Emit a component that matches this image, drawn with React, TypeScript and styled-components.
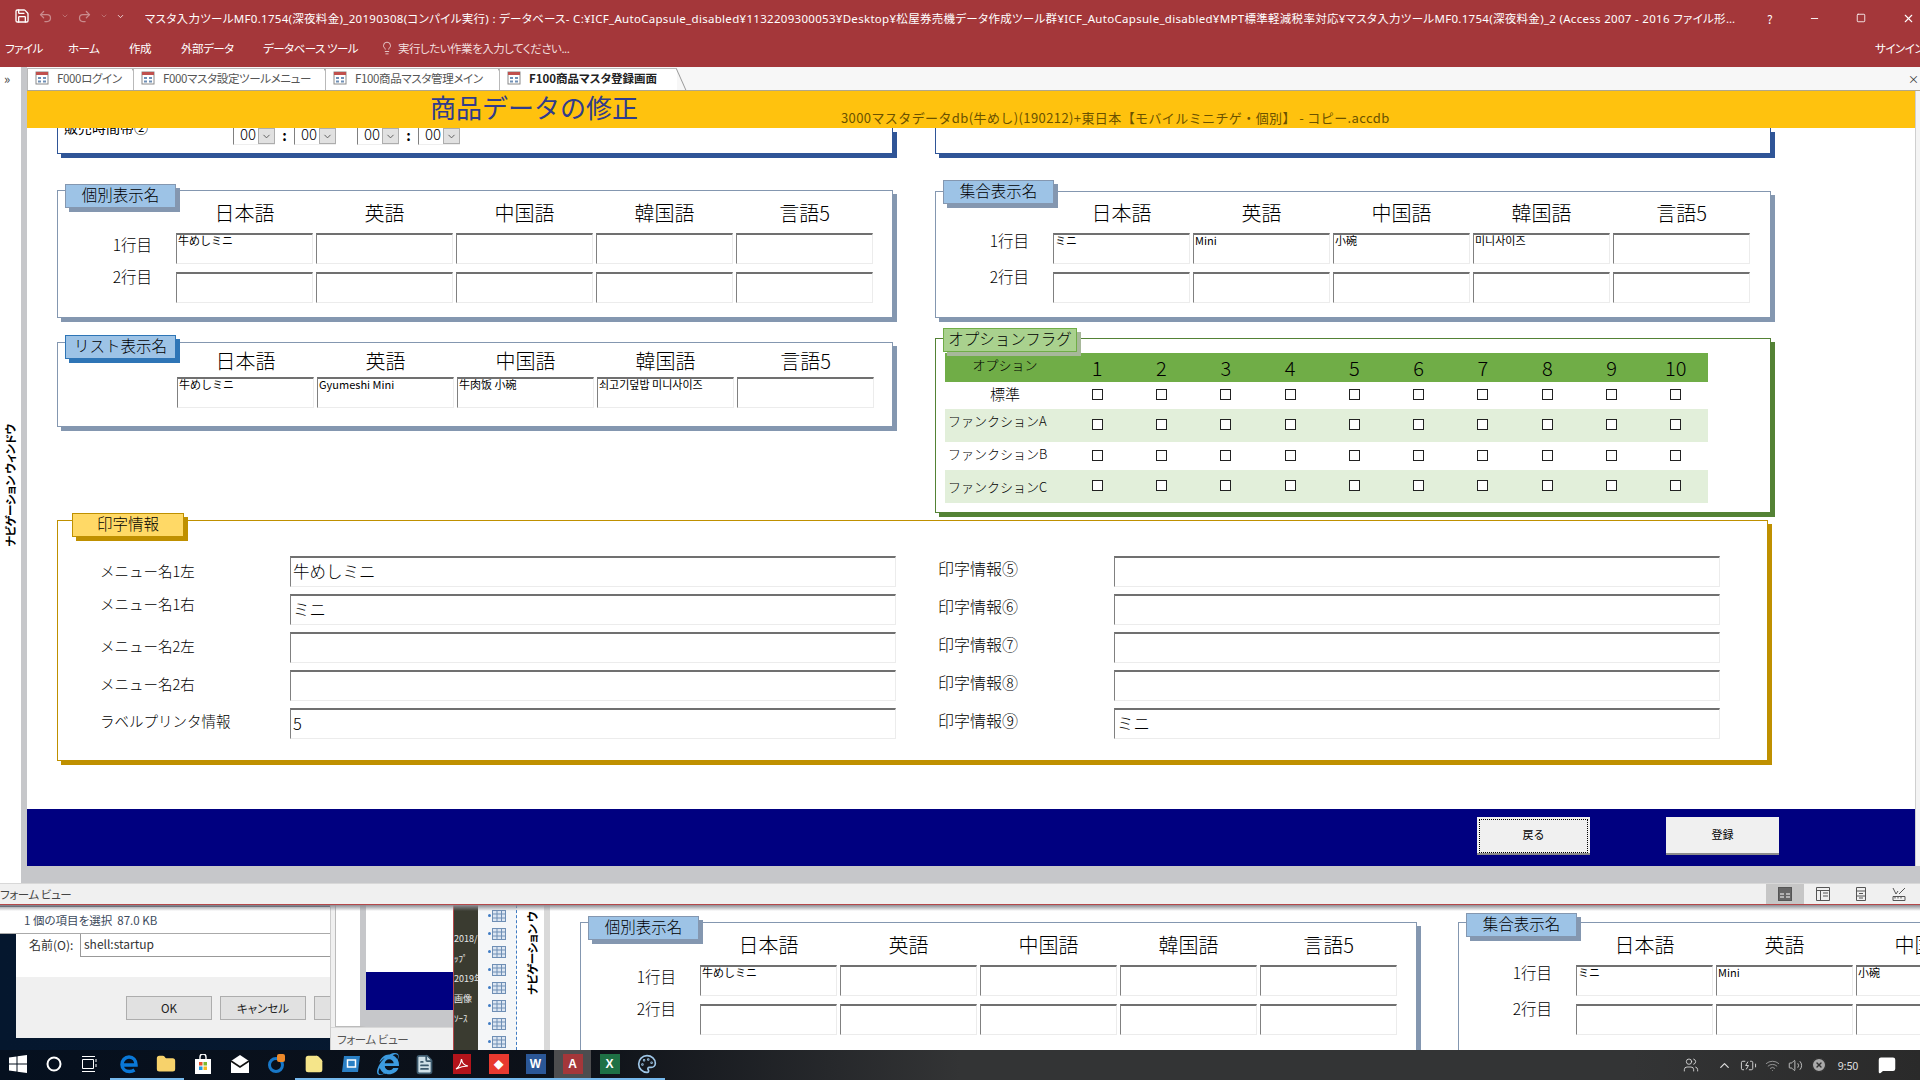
import styled, { createGlobalStyle } from "styled-components";
import {
  Save,
  Undo2,
  Redo2,
  ChevronDown,
  ChevronUp,
  Lightbulb,
  Minus,
  Square,
  X,
  Wifi,
  Volume2,
  BatteryCharging,
  CircleX,
  MessageSquare,
  Users,
  Folder,
  StickyNote,
  FileText,
  Palette,
} from "lucide-react";
import { FaInternetExplorer } from "react-icons/fa";

const GlobalStyle = createGlobalStyle`
  html, body {
    margin: 0;
    padding: 0;
    overflow: hidden;
    background: #000;
    font-family: "Noto Sans CJK JP", "Liberation Sans", sans-serif;
    color: #000;
  }
  * { box-sizing: border-box; }
`;

const LANGS = ["日本語", "英語", "中国語", "韓国語", "言語5"];
const FLAGS = [1, 2, 3, 4, 5, 6, 7, 8, 9, 10];

type RowDef = { label?: string; dy?: number; values?: string[] };

const FormIcon = () => (
  <svg width="14" height="14" viewBox="0 0 14 14">
    <rect x="1" y="1" width="12" height="12" fill="#fff" stroke="#8a8a8a" />
    <rect x="1" y="1" width="12" height="3" fill="#c0504d" />
    <path d="M3 6h3v2H3zM8 6h3v2H8zM3 9.5h3v2H3zM8 9.5h3v2H8z" fill="#6f8fb5" />
  </svg>
);

const ViewIcon = ({ kind }: { kind: number }) => (
  <svg width="14" height="14" viewBox="0 0 14 14" fill="none" stroke="#555">
    {kind === 0 && <rect x="0.5" y="0.5" width="13" height="13" fill="#666" />}
    {kind === 0 && <path d="M2 7h4M8 7h4M2 10h4M8 10h4" stroke="#fff" />}
    {kind === 1 && <path d="M.5.5h13v13H.5zM.5 3.5h13M4.500 3.500v10M7 6h5M7 9h5" />}
    {kind === 2 && <path d="M2.500.5h9v13h-9zM2.500 4h9M2.500 9h9M5 6.500h4M5 11h4" />}
    {kind === 3 && <path d="M1 13.500h12v-4H1zM3 9.500v2M6 9.500v2M9 9.500v2M1 1l3 6 2-3M7 7l6-6" />}
  </svg>
);

const TimeField = () => (
  <TimeBox>
    <TimeText>00</TimeText>
    <TimeDrop>
      <ChevronDown size={11} color="#555" />
    </TimeDrop>
  </TimeBox>
);

const LanguageTable = ({
  labelWidth,
  headHeight,
  rows,
}: {
  labelWidth: number;
  headHeight: number;
  rows: RowDef[];
}) => (
  <NameGrid $labelWidth={labelWidth}>
    <span />
    {LANGS.map((l) => (
      <LangHead key={l} $height={headHeight}>
        {l}
      </LangHead>
    ))}
    {rows.map((row, i) => (
      <NameRow key={i}>
        <RowLabel $dy={row.dy ?? 0}>{row.label}</RowLabel>
        {LANGS.map((l, j) => (
          <SunkenInput key={l}>{row.values?.[j]}</SunkenInput>
        ))}
      </NameRow>
    ))}
  </NameGrid>
);

const PrintColumn = ({
  labelWidth,
  labelSize,
  rows,
}: {
  labelWidth: number;
  labelSize: number;
  rows: { label: string; dy: number; value?: string }[];
}) => (
  <PrintCol>
    {rows.map((r) => (
      <PrintRow key={r.label} $labelWidth={labelWidth}>
        <PrintLabel $dy={r.dy} $size={labelSize}>
          {r.label}
        </PrintLabel>
        <PrintInput>{r.value}</PrintInput>
      </PrintRow>
    ))}
  </PrintCol>
);

function EdgeLogo() {
  return (
    <svg width="20" height="20" viewBox="0 0 20 20" fill="none">
      <path d="M3 11h14c0-5-3-8-7-8s-7 3.500-7 7.500c0 4.500 3.500 7 7.500 7 2 0 3.500-.5 5-1.500" stroke="#0a78d7" strokeWidth="3.500" />
    </svg>
  );
}

function CircleBadge() {
  return (
    <svg width="20" height="22" viewBox="0 0 20 22" fill="none">
      <circle cx="9" cy="12" r="6.500" stroke="#1878c8" strokeWidth="3" />
      <rect x="10" y="1" width="8" height="8" rx="2" fill="#ee8a2a" />
    </svg>
  );
}

function BlueSquare() {
  return (
    <svg width="20" height="18" viewBox="0 0 20 18">
      <path d="M3 1h16l-2 16H1z" fill="#2a7fc4" />
      <rect x="6.500" y="5" width="8" height="7" fill="none" stroke="#fff" strokeWidth="1.500" />
    </svg>
  );
}

function StoreLogo() {
  return (
    <svg width="16" height="20" viewBox="0 0 16 20">
      <path d="M5 5V3a3 3 0 0 1 6 0v2" fill="none" stroke="#fff" strokeWidth="1.400" />
      <rect x="0" y="5" width="16" height="15" fill="#fff" />
      <rect x="4" y="8" width="3.500" height="3.500" fill="#e8502a" />
      <rect x="8.500" y="8" width="3.500" height="3.500" fill="#7cb82f" />
      <rect x="4" y="12.500" width="3.500" height="3.500" fill="#1f9ae0" />
      <rect x="8.500" y="12.500" width="3.500" height="3.500" fill="#f5b81e" />
    </svg>
  );
}

function MailLogo() {
  return (
    <svg width="20" height="18" viewBox="0 0 20 18">
      <path d="M1 6 10 0l9 6v12H1z" fill="#fff" />
      <path d="M1 6l9 6 9-6" fill="none" stroke="#111" strokeWidth="1.600" />
    </svg>
  );
}

function AcrobatLogo() {
  return (
    <svg width="18" height="20" viewBox="0 0 18 20">
      <rect width="18" height="20" fill="#b3141b" />
      <path d="M3 15c3-2 5-6 5.500-10 .5 4 3 6.500 6.500 7-4 0-8 1-12 3z" fill="none" stroke="#fff" strokeWidth="1.200" />
    </svg>
  );
}

export default function App() {
  const taskIcons = [
    <EdgeLogo key="edge" />,
    <Folder key="folder" size={20} color="#f7d26b" fill="#f7d26b" />,
    <StoreLogo key="store" />,
    <MailLogo key="mail" />,
    <CircleBadge key="thunder" />,
    <StickyNote key="sticky" size={20} color="#f5e58a" fill="#f5e58a" />,
    <BlueSquare key="blue" />,
    <FaInternetExplorer key="ie" size={22} color="#3c9be0" />,
    <FileText key="note" size={21} color="#3d5a6e" fill="#cfe0e8" />,
    <AcrobatLogo key="pdf" />,
    <AppTile key="red" $bg="#e8392f">
      ◆
    </AppTile>,
    <AppTile key="word" $bg="#2b5797">
      W
    </AppTile>,
    <AppTile key="access" $bg="#a4373a">
      A
    </AppTile>,
    <AppTile key="excel" $bg="#1e7145">
      X
    </AppTile>,
    <Palette key="paint" size={20} color="#9fc7e8" />,
  ];

  return (
    <Screen>
      <GlobalStyle />
      <TitleBar>
        <QuickAccess>
          <Save size={16} color="#fff" />
          <Undo2 size={15} color="#c98b8d" />
          <ChevronDown size={8} color="#c98b8d" />
          <Redo2 size={15} color="#c98b8d" />
          <ChevronDown size={8} color="#c98b8d" />
          <ChevronDown size={9} color="#fff" />
        </QuickAccess>
        <TitleText>
          マスタ入力ツールMF0.1754(深夜料金)_20190308(コンパイル実行) : データベース- C:¥ICF_AutoCapsule_disabled¥1132209300053¥Desktop¥松屋券売機データ作成ツール群¥ICF_AutoCapsule_disabled¥MPT標準軽減税率対応¥マスタ入力ツールMF0.1754(深夜料金)_2 (Access 2007 - 2016 ファイル形…
        </TitleText>
        <WindowControls>
          <WindowGlyph>?</WindowGlyph>
          <Minus size={11} color="#fff" />
          <Square size={10} color="#fff" />
          <X size={13} color="#fff" />
        </WindowControls>
      </TitleBar>
      <MenuBar>
        <MenuItem $width={63}>ファイル</MenuItem>
        <MenuItem $width={61}>ホーム</MenuItem>
        <MenuItem $width={52}>作成</MenuItem>
        <MenuItem $width={82}>外部データ</MenuItem>
        <MenuItem $width={117}>データベース ツール</MenuItem>
        <Lightbulb size={14} color="#fff" strokeWidth={1.2} />
        <TellMe>実行したい作業を入力してください...</TellMe>
        <SignIn>サインイン</SignIn>
      </MenuBar>

      <AccessBody>
        <NavStrip>
          <NavText>ナビゲーション ウィンドウ</NavText>
          <NavChevron>»</NavChevron>
        </NavStrip>
        <MainColumn>
          <TabStrip>
            <Tab $width={106}>
              <FormIcon />
              F000ログイン
            </Tab>
            <Tab $width={192}>
              <FormIcon />
              F000マスタ設定ツールメニュー
            </Tab>
            <Tab $width={174}>
              <FormIcon />
              F100商品マスタ管理メイン
            </Tab>
            <Tab $width={178} $active>
              <FormIcon />
              F100商品マスタ登録画面
            </Tab>
            <TabClose>×</TabClose>
          </TabStrip>
          <FormRow>
            <FormColumn>
              <FormHeader>
                <FormTitle>商品データの修正</FormTitle>
                <FormSource>
                  3000マスタデータdb(牛めし)(190212)+東日本【モバイルミニチゲ・個別】 - コピー.accdb
                </FormSource>
              </FormHeader>
              <FormBody>
                <FormGrid>
                  <FormCol>
                    <Stub>
                      <TimeRow>
                        <TimeLabel>販売時間帯②</TimeLabel>
                        <TimeField />
                        <TimeColon>:</TimeColon>
                        <TimeField />
                        <TimeGap />
                        <TimeField />
                        <TimeColon>:</TimeColon>
                        <TimeField />
                      </TimeRow>
                    </Stub>
                    <Panel $accent="#8497b0" $top={36}>
                      <PanelTag $bg="#9dc3e6" $line="#8497b0" $shadow="#8497b0" $left={7} $top={-7} $width={111}>
                        個別表示名
                      </PanelTag>
                      <LanguageTable
                        labelWidth={115}
                        headHeight={42}
                        rows={[
                          { label: "1行目", dy: -1, values: ["牛めしミニ"] },
                          { label: "2行目", dy: -8 },
                        ]}
                      />
                      <PanelFoot $height={14} />
                    </Panel>
                    <Panel $accent="#8497b0" $top={24}>
                      <PanelTag $bg="#9dc3e6" $line="#2e75b6" $shadow="#2e75b6" $left={7} $top={-8} $width={111}>
                        リスト表示名
                      </PanelTag>
                      <LanguageTable
                        labelWidth={116}
                        headHeight={34}
                        rows={[
                          { values: ["牛めしミニ", "Gyumeshi Mini", "牛肉饭 小碗", "쇠고기덮밥 미니사이즈"] },
                        ]}
                      />
                      <PanelFoot $height={18} />
                    </Panel>
                  </FormCol>
                  <FormCol>
                    <Stub />
                    <Panel $accent="#8497b0" $top={37}>
                      <PanelTag $bg="#9dc3e6" $line="#8497b0" $shadow="#8497b0" $left={7} $top={-12} $width={111}>
                        集合表示名
                      </PanelTag>
                      <LanguageTable
                        labelWidth={114}
                        headHeight={41}
                        rows={[
                          { label: "1行目", dy: -5, values: ["ミニ", "Mini", "小碗", "미니사이즈"] },
                          { label: "2行目", dy: -8 },
                        ]}
                      />
                      <PanelFoot $height={14} />
                    </Panel>
                    <Panel $accent="#548235" $top={20}>
                      <PanelTag $bg="#a9d18e" $line="#70ad47" $shadow="#a7b89a" $left={7} $top={-11} $width={134}>
                        オプションフラグ
                      </PanelTag>
                      <OptionTable>
                        <OptionRow $height={29} $bg="#70ad47">
                          <OptionName $size={13} $dy={-7}>
                            オプション
                          </OptionName>
                          {FLAGS.map((n) => (
                            <OptionNumber key={n}>{n}</OptionNumber>
                          ))}
                        </OptionRow>
                        {[
                          { name: "標準", height: 27, bg: "#fff", size: 15, center: true, dy: -5 },
                          { name: "ファンクションA", height: 33, bg: "#e2efda", size: 13, center: false, dy: -11 },
                          { name: "ファンクションB", height: 28, bg: "#fff", size: 13, center: false, dy: -6 },
                          { name: "ファンクションC", height: 33, bg: "#e2efda", size: 13, center: false, dy: 0 },
                        ].map((row) => (
                          <OptionRow key={row.name} $height={row.height} $bg={row.bg}>
                            <OptionName $size={row.size} $left={!row.center} $dy={row.dy}>
                              {row.name}
                            </OptionName>
                            {FLAGS.map((n) => (
                              <CheckCell key={n}>
                                <CheckBox />
                              </CheckCell>
                            ))}
                          </OptionRow>
                        ))}
                      </OptionTable>
                    </Panel>
                  </FormCol>
                  <PrintPanel>
                    <PanelTag $bg="#ffd966" $line="#bf9000" $shadow="#bf9000" $left={14} $top={-8} $width={112}>
                      印字情報
                    </PanelTag>
                    <PrintColumn
                      labelWidth={190}
                      labelSize={14.5}
                      rows={[
                        { label: "メニュー名1左", dy: -1, value: "牛めしミニ" },
                        { label: "メニュー名1右", dy: -6, value: "ミニ" },
                        { label: "メニュー名2左", dy: -2 },
                        { label: "メニュー名2右", dy: -2 },
                        { label: "ラベルプリンタ情報", dy: -3, value: "5" },
                      ]}
                    />
                    <PrintColumn
                      labelWidth={176}
                      labelSize={16}
                      rows={[
                        { label: "印字情報⑤", dy: -4 },
                        { label: "印字情報⑥", dy: -4 },
                        { label: "印字情報⑦", dy: -4 },
                        { label: "印字情報⑧", dy: -4 },
                        { label: "印字情報⑨", dy: -4, value: "ミニ" },
                      ]}
                    />
                  </PrintPanel>
                </FormGrid>
              </FormBody>
              <NavyFooter>
                <FormButton $focused>戻る</FormButton>
                <FormButton>登録</FormButton>
              </NavyFooter>
            </FormColumn>
            <ScrollEdge />
          </FormRow>
          <GrayBand />
        </MainColumn>
      </AccessBody>

      <StatusBar>
        <span>フォーム ビュー</span>
        <ViewSwitch>
          {[0, 1, 2, 3].map((k) => (
            <ViewButton key={k} $active={k === 0}>
              <ViewIcon kind={k} />
            </ViewButton>
          ))}
        </ViewSwitch>
      </StatusBar>

      <Desktop>
        <ExplorerStatus>1 個の項目を選択&nbsp;&nbsp;87.0 KB</ExplorerStatus>
        <RunDialog>
          <RunField>
            <RunLabel>名前(O):</RunLabel>
            <RunInput>shell:startup</RunInput>
          </RunField>
          <RunFooter>
            <RunButton>OK</RunButton>
            <RunButton>キャンセル</RunButton>
            <RunButton />
          </RunFooter>
        </RunDialog>
        <BackAccess>
          <BackColumns>
            <BackNav />
            <BackForm>
              <BackWhite />
              <BackNavy />
              <BackGray />
            </BackForm>
          </BackColumns>
          <BackStatus>フォーム ビュー</BackStatus>
        </BackAccess>
        <FrontAccess>
          <PhotoStrip>
            <PhotoText>2018/</PhotoText>
            <PhotoText>ｯﾌﾟ</PhotoText>
            <PhotoText>2019年</PhotoText>
            <PhotoText>画像</PhotoText>
            <PhotoText>ｿｰｽ</PhotoText>
          </PhotoStrip>
          <ObjectList>
            {[0, 1, 2, 3, 4, 5, 6, 7].map((i) => (
              <ObjectRow key={i}>
                <svg width="14" height="12" viewBox="0 0 14 12">
                  <rect x=".5" y=".5" width="13" height="11" fill="#dce6f2" stroke="#6f8fb5" />
                  <path d="M.5 4h13M.5 8h13M5 .5v11M9.500 .5v11" stroke="#6f8fb5" />
                </svg>
              </ObjectRow>
            ))}
          </ObjectList>
          <BackNavStrip>
            <BackNavText>ナビゲーション ウ</BackNavText>
          </BackNavStrip>
          <FrontCanvas>
            <Panel $accent="#8497b0" $top={0}>
              <PanelTag $bg="#9dc3e6" $line="#8497b0" $shadow="#8497b0" $left={7} $top={-7} $width={111}>
                個別表示名
              </PanelTag>
              <LanguageTable
                labelWidth={116}
                headHeight={42}
                rows={[
                  { label: "1行目", dy: -1, values: ["牛めしミニ"] },
                  { label: "2行目", dy: -8 },
                ]}
              />
              <PanelFoot $height={30} />
            </Panel>
            <Panel $accent="#8497b0" $top={0}>
              <PanelTag $bg="#9dc3e6" $line="#8497b0" $shadow="#8497b0" $left={7} $top={-10} $width={111}>
                集合表示名
              </PanelTag>
              <LanguageTable
                labelWidth={114}
                headHeight={42}
                rows={[
                  { label: "1行目", dy: -5, values: ["ミニ", "Mini", "小碗"] },
                  { label: "2行目", dy: -8 },
                ]}
              />
              <PanelFoot $height={30} />
            </Panel>
          </FrontCanvas>
        </FrontAccess>
        <WindowShadow />
      </Desktop>

      <TaskBar>
        <TaskButton $width={36}>
          <svg width="18" height="18" viewBox="0 0 18 18" fill="#fff">
            <path d="M0 2.500 7.500 1.500v7H0zM8.500 1.300 18 0v8.500H8.500zM0 9.500h7.500v7L0 15.500zM8.500 9.500H18V18l-9.500-1.300z" />
          </svg>
        </TaskButton>
        <TaskButton $width={36}>
          <svg width="16" height="16" viewBox="0 0 16 16" fill="none" stroke="#fff" strokeWidth="2">
            <circle cx="8" cy="8" r="6.500" />
          </svg>
        </TaskButton>
        <TaskButton $width={36}>
          <svg width="16" height="16" viewBox="0 0 16 16" fill="none" stroke="#fff">
            <path d="M0 .5h13M0 15.500h13M.5 3.500h11v9H.5zM14 3v3M14 8v3" />
          </svg>
        </TaskButton>
        <TaskApps>
          {taskIcons.map((icon, i) => (
            <TaskButton key={i} $width={37} $running={i < 2 || i > 4} $active={i === 12}>
              {icon}
            </TaskButton>
          ))}
        </TaskApps>
        <Tray>
          <Users size={16} color="#ddd" strokeWidth={1.3} />
          <TraySpacer />
          <ChevronUp size={15} color="#ddd" />
          <BatteryCharging size={17} color="#ddd" strokeWidth={1.3} />
          <Wifi size={15} color="#aaa" strokeWidth={1.3} />
          <Volume2 size={15} color="#ddd" strokeWidth={1.3} />
          <CircleX size={16} color="#333" fill="#aaa" />
          <TrayClock>9:50</TrayClock>
          <MessageSquare size={18} color="#fff" fill="#fff" />
        </Tray>
      </TaskBar>
    </Screen>
  );
}

const Screen = styled.div`
  width: 1920px;
  height: 1080px;
  display: flex;
  flex-direction: column;
  overflow: hidden;
  background: #fff;
`;

const TitleBar = styled.div`
  height: 34px;
  display: flex;
  align-items: center;
  padding-top: 2px;
  background: #a4373a;
  color: #fff;
`;

const QuickAccess = styled.div`
  width: 145px;
  flex: none;
  display: flex;
  align-items: center;
  gap: 8px;
  padding-left: 14px;
  padding-bottom: 4px;
`;

const TitleText = styled.div`
  width: 1590px;
  flex: none;
  font-family: "Noto Sans", "Noto Sans CJK JP", sans-serif;
  font-feature-settings: "palt";
  font-size: 11.5px;
  letter-spacing: 0.3px;
  white-space: nowrap;
  overflow: hidden;
`;

const WindowControls = styled.div`
  flex: 1;
  display: flex;
  align-items: center;
  gap: 36px;
  padding-left: 32px;
`;

const WindowGlyph = styled.span`
  font-size: 12px;
`;

const MenuBar = styled.div`
  height: 33px;
  display: flex;
  align-items: center;
  padding: 0 0 6px 5px;
  background: #a4373a;
  color: #fff;
  font-feature-settings: "palt";
  font-size: 11.5px;
  letter-spacing: -0.5px;
`;

const MenuItem = styled.span<{ $width: number }>`
  width: ${(p) => p.$width}px;
  flex: none;
  white-space: nowrap;
`;

const TellMe = styled.span`
  margin-left: 4px;
  color: #f1dcdc;
`;

const SignIn = styled.span`
  margin-left: auto;
  margin-right: -4px;
  white-space: nowrap;
`;

const AccessBody = styled.div`
  height: 816px;
  flex: none;
  display: flex;
`;

const NavStrip = styled.div`
  position: relative;
  width: 27px;
  flex: none;
  display: flex;
  align-items: center;
  border-right: 6px solid #c6c7ca;
  background: #fff;
`;

const NavChevron = styled.span`
  position: absolute;
  left: 4px;
  top: 2px;
  font-size: 13px;
  color: #444;
`;

const NavText = styled.span`
  margin-left: 2px;
  margin-top: 20px;
  writing-mode: vertical-rl;
  text-orientation: sideways;
  transform: rotate(180deg);
  font-feature-settings: "palt";
  font-size: 11.500px;
  font-weight: 700;
  letter-spacing: -0.4px;
  white-space: nowrap;
`;

const MainColumn = styled.div`
  flex: 1;
  min-width: 0;
  display: flex;
  flex-direction: column;
`;

const TabStrip = styled.div`
  height: 24px;
  flex: none;
  display: flex;
  align-items: flex-end;
  background: #f7f7f7;
  border-bottom: 1px solid #b1a78b;
`;

const Tab = styled.div<{ $width: number; $active?: boolean }>`
  position: relative;
  width: ${(p) => p.$width}px;
  height: 22px;
  flex: none;
  display: flex;
  align-items: center;
  gap: 8px;
  padding: 0 0 3px 7px;
  border: 1px solid #b9b9b9;
  border-right: none;
  border-bottom: none;
  background: #fff;
  font-feature-settings: "palt";
  font-size: 11.5px;
  font-weight: ${(p) => (p.$active ? 700 : 400)};
  letter-spacing: ${(p) => (p.$active ? "0" : "-0.35px")};
  color: ${(p) => (p.$active ? "#222" : "#555")};
  white-space: nowrap;
  &::after {
    content: "";
    position: absolute;
    right: 0;
    top: 0;
    bottom: 0;
    border-right: 1px solid #999;
    transform: skewX(24deg);
    transform-origin: top;
  }
`;

const TabClose = styled.span`
  margin-left: auto;
  margin-right: 1px;
  align-self: center;
  font-size: 11px;
  color: #333;
`;

const FormRow = styled.div`
  height: 775px;
  flex: none;
  display: flex;
`;

const FormColumn = styled.div`
  width: 1888px;
  flex: none;
  display: flex;
  flex-direction: column;
`;

const ScrollEdge = styled.div`
  flex: 1;
  border-left: 1px solid #cfcfcf;
  background: #f4f4f4;
`;

const FormHeader = styled.div`
  height: 37px;
  flex: none;
  display: flex;
  padding-left: 403px;
  background: #ffc20e;
`;

const FormTitle = styled.h1`
  margin: 0;
  width: 206px;
  flex: none;
  font-size: 26px;
  line-height: 31px;
  font-weight: 400;
  color: #303c8c;
  white-space: nowrap;
`;

const FormSource = styled.span`
  margin-left: 205px;
  margin-bottom: 1px;
  align-self: flex-end;
  font-size: 13px;
  line-height: 19px;
  letter-spacing: 0.4px;
  color: #6b5200;
  white-space: nowrap;
`;

const FormBody = styled.div`
  flex: 1;
  min-height: 0;
  overflow: hidden;
  background: #fff;
  padding-left: 30px;
`;

const FormGrid = styled.div`
  display: grid;
  grid-template-columns: 836px 836px;
  column-gap: 42px;
  row-gap: 7px;
  align-items: start;
`;

const FormCol = styled.div`
  display: flex;
  flex-direction: column;
`;

const Stub = styled.div`
  height: 26px;
  overflow: hidden;
  border: 1px solid #2f5597;
  border-top: none;
  box-shadow: 4px 4px 0 #2f5597;
`;

const TimeRow = styled.div`
  height: 17px;
  display: flex;
  align-items: stretch;
`;

const TimeLabel = styled.span`
  width: 175px;
  flex: none;
  padding-left: 6px;
  margin-top: -11px;
  font-size: 14px;
  line-height: 20px;
  white-space: nowrap;
`;

const TimeBox = styled.div`
  width: 42px;
  flex: none;
  display: flex;
  justify-content: space-between;
  border-left: 1px solid #808080;
  border-bottom: 1px solid #eee;
`;

const TimeText = styled.span`
  margin-top: -5px;
  padding-left: 6px;
  font-size: 15px;
  font-weight: 300;
  line-height: 22px;
`;

const TimeDrop = styled.span`
  width: 17px;
  display: flex;
  align-items: center;
  justify-content: center;
  background: #e1e1e1;
  border: 1px solid #adadad;
`;

const TimeColon = styled.span`
  width: 19px;
  flex: none;
  text-align: center;
  font-size: 14px;
  line-height: 14px;
  font-weight: 700;
`;

const TimeGap = styled.span`
  width: 21px;
  flex: none;
`;

const Panel = styled.section<{ $accent: string; $top: number }>`
  position: relative;
  margin-top: ${(p) => p.$top}px;
  border: 1px solid ${(p) => p.$accent};
  box-shadow: 4px 4px 0 ${(p) => p.$accent};
  background: #fff;
`;

const PanelTag = styled.div<{
  $bg: string;
  $line: string;
  $shadow: string;
  $left: number;
  $top: number;
  $width: number;
}>`
  position: absolute;
  z-index: 2;
  left: ${(p) => p.$left}px;
  top: ${(p) => p.$top}px;
  width: ${(p) => p.$width}px;
  height: 24px;
  display: flex;
  align-items: center;
  justify-content: center;
  padding-bottom: 4px;
  background: ${(p) => p.$bg};
  border: 1px solid ${(p) => p.$line};
  box-shadow: 4px 4px 0 ${(p) => p.$shadow};
  font-size: 15.500px;
  font-weight: 300;
  white-space: nowrap;
`;

const PanelFoot = styled.div<{ $height: number }>`
  height: ${(p) => p.$height}px;
`;

const NameGrid = styled.div<{ $labelWidth: number }>`
  display: grid;
  grid-template-columns: ${(p) => p.$labelWidth}px repeat(5, 137px);
  column-gap: 3px;
  row-gap: 8px;
`;

const LangHead = styled.div<{ $height: number }>`
  height: ${(p) => p.$height}px;
  display: flex;
  align-items: center;
  justify-content: center;
  font-size: 20px;
  font-weight: 300;
  margin-bottom: -8px;
`;

const NameRow = styled.div`
  display: contents;
`;

const RowLabel = styled.div<{ $dy: number }>`
  margin-top: ${(p) => p.$dy}px;
  margin-right: 21px;
  font-feature-settings: "palt";
  font-size: 15.500px;
  font-weight: 300;
  line-height: 24px;
  text-align: right;
`;

const SunkenInput = styled.div`
  height: 31px;
  overflow: hidden;
  padding-left: 1px;
  background: #fff;
  border-top: 2px solid #707070;
  border-left: 1.5px solid #808080;
  border-right: 1px solid #ececec;
  border-bottom: 1px solid #ececec;
  font-size: 11px;
  line-height: 11px;
  white-space: nowrap;
`;

const OptionTable = styled.div`
  margin: 14px 0 9px 9px;
  width: 763px;
`;

const OptionRow = styled.div<{ $height: number; $bg: string }>`
  height: ${(p) => p.$height}px;
  display: grid;
  grid-template-columns: 120px repeat(10, 64.3px);
  align-items: center;
  background: ${(p) => p.$bg};
`;

const OptionName = styled.div<{ $size: number; $left?: boolean; $dy: number }>`
  padding-left: ${(p) => (p.$left ? "3px" : "0")};
  margin-top: ${(p) => p.$dy}px;
  text-align: ${(p) => (p.$left ? "left" : "center")};
  font-size: ${(p) => p.$size}px;
  font-weight: 300;
  white-space: nowrap;
`;

const OptionNumber = styled.div`
  text-align: center;
  font-size: 20px;
  font-weight: 300;
  line-height: 25px;
`;

const CheckCell = styled.div`
  display: flex;
  justify-content: center;
  margin-top: -2px;
`;

const CheckBox = styled.span`
  width: 11px;
  height: 11px;
  border: 1px solid #222;
  background: #fff;
`;

const PrintPanel = styled.section`
  position: relative;
  grid-column: 1 / span 2;
  width: 1711px;
  display: flex;
  gap: 42px;
  padding: 35px 49px 21px 42px;
  border: 1px solid #bf9000;
  box-shadow: 4px 4px 0 #bf9000;
  background: #fff;
`;

const PrintCol = styled.div`
  display: flex;
  flex-direction: column;
  gap: 7px;
`;

const PrintRow = styled.div<{ $labelWidth: number }>`
  display: grid;
  grid-template-columns: ${(p) => p.$labelWidth}px 606px;
  align-items: center;
`;

const PrintLabel = styled.div<{ $dy: number; $size: number }>`
  margin-top: ${(p) => p.$dy * 2}px;
  font-size: ${(p) => p.$size}px;
  font-weight: 300;
  white-space: nowrap;
`;

const PrintInput = styled.div`
  height: 31px;
  padding-left: 2px;
  background: #fff;
  border-top: 2px solid #707070;
  border-left: 1.5px solid #808080;
  border-right: 1px solid #ececec;
  border-bottom: 1px solid #ececec;
  font-size: 16.500px;
  font-weight: 300;
  line-height: 26px;
`;

const NavyFooter = styled.div`
  height: 57px;
  flex: none;
  display: flex;
  align-items: center;
  gap: 76px;
  padding: 0 0 3px 1450px;
  background: #000080;
`;

const FormButton = styled.button<{ $focused?: boolean }>`
  width: 113px;
  height: 38px;
  padding: 0 0 3px;
  border: none;
  border-bottom: 2px solid #8c8c8c;
  background: #f0f0f0;
  font-family: inherit;
  font-size: 11px;
  color: #000;
  outline: ${(p) => (p.$focused ? "1px dotted #000" : "none")};
  outline-offset: -3px;
`;

const GrayBand = styled.div`
  flex: 1;
  background: #c6c7ca;
`;

const StatusBar = styled.div`
  height: 22px;
  flex: none;
  display: flex;
  align-items: center;
  background: #f0f0f0;
  border-bottom: 1px solid #b5484a;
  border-top: 1px solid #d8d8d8;
  font-feature-settings: "palt";
  font-size: 11.500px;
  letter-spacing: -0.4px;
  color: #444;
`;

const ViewSwitch = styled.div`
  margin-left: auto;
  margin-right: 2px;
  display: flex;
  align-self: stretch;
`;

const ViewButton = styled.div<{ $active: boolean }>`
  width: 38px;
  display: flex;
  align-items: center;
  justify-content: center;
  background: ${(p) => (p.$active ? "#c6c6c6" : "transparent")};
`;

const Desktop = styled.div`
  position: relative;
  height: 145px;
  flex: none;
  overflow: hidden;
  background: linear-gradient(90deg, #05172e, #0a1f38);
`;

const WindowShadow = styled.div`
  position: absolute;
  z-index: 3;
  left: 0;
  right: 0;
  top: 0;
  height: 6px;
  background: linear-gradient(#8d8d94, rgba(255, 255, 255, 0));
`;

const ExplorerStatus = styled.div`
  position: absolute;
  left: 0;
  top: 2px;
  width: 330px;
  height: 27px;
  padding: 5px 0 0 24px;
  background: #fff;
  border-bottom: 1px solid #aaa;
  font-feature-settings: "palt";
  font-size: 11.500px;
  color: #3c4a5c;
`;

const RunDialog = styled.div`
  position: absolute;
  left: 16px;
  top: 29px;
  width: 314px;
  height: 104px;
  display: flex;
  flex-direction: column;
  background: #fff;
`;

const RunField = styled.div`
  height: 43px;
  display: flex;
  padding-left: 13px;
`;

const RunLabel = styled.span`
  width: 51px;
  flex: none;
  padding-top: 2px;
  font-feature-settings: "palt";
  font-size: 12px;
  color: #333;
`;

const RunInput = styled.div`
  flex: 1;
  height: 23px;
  padding: 0 3px;
  border: 1px solid #999;
  border-top: none;
  border-right: none;
  font-size: 12px;
  line-height: 19px;
  color: #333;
`;

const RunFooter = styled.div`
  flex: 1;
  display: flex;
  gap: 8px;
  padding: 19px 0 0 110px;
  background: #f0f0f0;
`;

const RunButton = styled.div`
  width: 86px;
  height: 24px;
  flex: none;
  text-align: center;
  border: 1px solid #adadad;
  background: #e1e1e1;
  font-feature-settings: "palt";
  font-size: 11.500px;
  line-height: 22px;
  color: #222;
`;

const BackAccess = styled.div`
  position: absolute;
  left: 330px;
  top: 0;
  width: 123px;
  height: 145px;
  display: flex;
  flex-direction: column;
  background: #f0f0f0;
  border-left: 1px solid #ccc;
`;

const BackColumns = styled.div`
  height: 122px;
  flex: none;
  display: flex;
`;

const BackNav = styled.div`
  width: 31px;
  flex: none;
  margin-left: 4px;
  background: #fff;
  border-left: 1px solid #bbb;
  border-right: 6px solid #c6c7ca;
  border-bottom: 1px solid #bbb;
`;

const BackForm = styled.div`
  flex: 1;
  display: flex;
  flex-direction: column;
`;

const BackWhite = styled.div`
  height: 67px;
  background: #fff;
`;

const BackNavy = styled.div`
  height: 38px;
  background: #000080;
`;

const BackGray = styled.div`
  flex: 1;
  background: #c6c7ca;
`;

const BackStatus = styled.div`
  flex: 1;
  padding-left: 6px;
  border-top: 1px solid #d8d8d8;
  font-feature-settings: "palt";
  font-size: 11.500px;
  line-height: 22px;
  letter-spacing: -0.4px;
  color: #555;
`;

const FrontAccess = styled.div`
  position: absolute;
  left: 453px;
  right: 0;
  top: 0;
  bottom: 0;
  display: flex;
  background: #fff;
`;

const PhotoStrip = styled.div`
  width: 25px;
  flex: none;
  display: flex;
  flex-direction: column;
  gap: 10px;
  padding-top: 29px;
  background: #3a3b30;
  border-left: 1px solid #b5484a;
  overflow: hidden;
`;

const PhotoText = styled.span`
  font-size: 9px;
  line-height: 10px;
  color: #e8e8e8;
  white-space: nowrap;
`;

const ObjectList = styled.div`
  width: 39px;
  flex: none;
  display: flex;
  flex-direction: column;
  padding: 2px 0 0 0;
  background: #f4f6f8;
  border-right: 1px dashed #3f7cc4;
`;

const ObjectRow = styled.div`
  height: 18px;
  flex: none;
  display: flex;
  align-items: center;
  padding-left: 14px;
  position: relative;
  &::before {
    content: "";
    position: absolute;
    left: 10px;
    top: 7px;
    width: 3px;
    height: 3px;
    border-radius: 50%;
    background: #3f7cc4;
  }
`;

const BackNavStrip = styled.div`
  width: 30px;
  flex: none;
  display: flex;
  justify-content: center;
  align-items: flex-start;
  padding-top: 5px;
  border-right: 6px solid #d9d9d9;
  margin-left: 3px;
  background: #fff;
`;

const BackNavText = styled.span`
  height: 85px;
  writing-mode: vertical-rl;
  text-orientation: sideways;
  transform: rotate(180deg);
  font-feature-settings: "palt";
  font-size: 11.500px;
  font-weight: 700;
  letter-spacing: -0.4px;
  white-space: nowrap;
  overflow: hidden;
`;

const FrontCanvas = styled.div`
  flex: 1;
  min-width: 0;
  display: flex;
  gap: 41px;
  padding: 17px 0 0 30px;
  & > section {
    width: 837px;
    flex: none;
    margin-top: 0;
    height: 140px;
  }
`;

const TaskBar = styled.div`
  height: 30px;
  flex: none;
  display: flex;
  background: linear-gradient(90deg, #05101f 0, #0d1118 30%, #333435 50%, #333435 85%, #2a2a2a 100%);
`;

const TaskApps = styled.div`
  display: flex;
  margin-left: 2px;
`;

const TaskButton = styled.div<{ $width: number; $running?: boolean; $active?: boolean }>`
  width: ${(p) => p.$width}px;
  flex: none;
  display: flex;
  align-items: center;
  justify-content: center;
  background: ${(p) => (p.$active ? "#4d4d4f" : "transparent")};
  border-bottom: 2px solid ${(p) => (p.$running ? "#76b9ed" : "transparent")};
`;

const AppTile = styled.span<{ $bg: string }>`
  width: 20px;
  height: 20px;
  display: flex;
  align-items: center;
  justify-content: center;
  background: ${(p) => p.$bg};
  color: #fff;
  font-family: "Liberation Sans", sans-serif;
  font-size: 12px;
  font-weight: 700;
`;

const Tray = styled.div`
  margin-left: auto;
  margin-right: 24px;
  display: flex;
  align-items: center;
  gap: 8px;
`;

const TraySpacer = styled.span`
  width: 2px;
`;

const TrayClock = styled.span`
  margin: 0 12px 0 3px;
  font-size: 11px;
  letter-spacing: -0.3px;
  color: #ddd;
`;
